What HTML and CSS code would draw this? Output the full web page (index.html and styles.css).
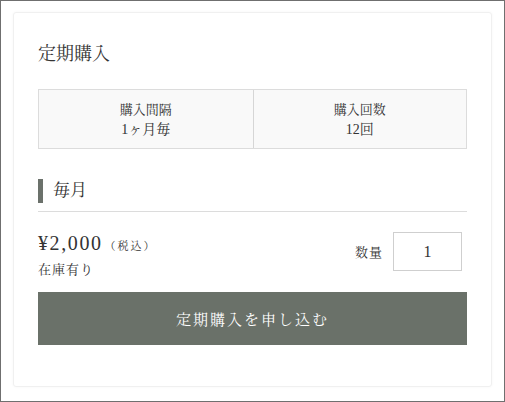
FILE: index.html
```html
<!DOCTYPE html>
<html lang="ja">
<head>
<meta charset="utf-8">
<link rel="stylesheet" href="styles.css">
</head>
<body>
<div class="frame">
  <div class="card">
    <h2 class="title">定期購入</h2>
    <div class="terms">
      <div class="term">
        <div class="term-label">購入間隔</div>
        <div class="term-value">1ヶ月毎</div>
      </div>
      <div class="term">
        <div class="term-label">購入回数</div>
        <div class="term-value">12回</div>
      </div>
    </div>
    <div class="plan-head">
      <h3 class="plan">毎月</h3>
    </div>
    <div class="buy-row">
      <div class="price-box">
        <div class="price">¥2,000<span class="tax">（税込）</span></div>
        <div class="stock">在庫有り</div>
      </div>
      <div class="qty">
        <span class="qty-label">数量</span>
        <div class="qty-input">1</div>
      </div>
    </div>
    <button class="submit">定期購入を申し込む</button>
  </div>
</div>
</body>
</html>
```
FILE: styles.css
```css
html, body {
  margin: 0;
  padding: 0;
  background: #fff;
}
body {
  font-family: "Liberation Serif", "Noto Serif CJK JP", "Noto Sans CJK JP", serif;
  color: #333;
}
.frame {
  box-sizing: border-box;
  width: 505px;
  height: 402px;
  border: 1px solid #6f6f6f;
  padding: 11px 12px 15px 12px;
}
.card {
  box-sizing: border-box;
  height: 375px;
  border: 1px solid #f0f0f0;
  border-radius: 3px;
  box-shadow: 0 0 3px rgba(0,0,0,0.04);
  padding: 0 24px;
  display: flex;
  flex-direction: column;
}
.title {
  margin: 30px 0 0 0;
  font-size: 18px;
  font-weight: normal;
  line-height: 22px;
  color: #333;
}
.terms {
  margin-top: 24px;
  display: grid;
  grid-template-columns: 1fr 1fr;
  border: 1px solid #dcdcdc;
  background: #f9f9f9;
  height: 60px;
  box-sizing: border-box;
}
.term {
  display: flex;
  flex-direction: column;
  align-items: center;
  padding-top: 11px;
}
.term + .term {
  border-left: 1px solid #d6d6d6;
}
.term-label {
  font-size: 13px;
  line-height: 18px;
}
.term-value {
  font-size: 14px;
  line-height: 22px;
}
.plan-head {
  margin-top: 30px;
  padding-bottom: 8px;
  border-bottom: 1px solid #dcdcdc;
}
.plan {
  margin: 0;
  font-size: 17px;
  font-weight: normal;
  line-height: 24px;
  border-left: 5px solid #6b716b;
  padding-left: 10px;
}
.buy-row {
  margin-top: 20px;
  display: flex;
  justify-content: space-between;
  align-items: flex-start;
  padding-right: 5px;
}
.price {
  font-size: 20px;
  letter-spacing: 1.6px;
  line-height: 22px;
}
.tax {
  font-size: 11px;
  letter-spacing: 2px;
  margin-left: 2px;
}
.stock {
  font-size: 13px;
  letter-spacing: 1px;
  line-height: 20px;
  margin-top: 3px;
}
.qty {
  display: flex;
  align-items: center;
  gap: 10px;
}
.qty-label {
  font-size: 13px;
  letter-spacing: 1px;
}
.qty-input {
  box-sizing: border-box;
  width: 69px;
  height: 39px;
  border: 1px solid #cfcfcf;
  display: flex;
  align-items: center;
  justify-content: center;
  font-size: 16px;
}
.submit {
  margin-top: 12px;
  height: 53px;
  border: none;
  background: #6a7169;
  color: #fff;
  font-family: inherit;
  font-size: 15px;
  letter-spacing: 2px;
  cursor: pointer;
}
```
